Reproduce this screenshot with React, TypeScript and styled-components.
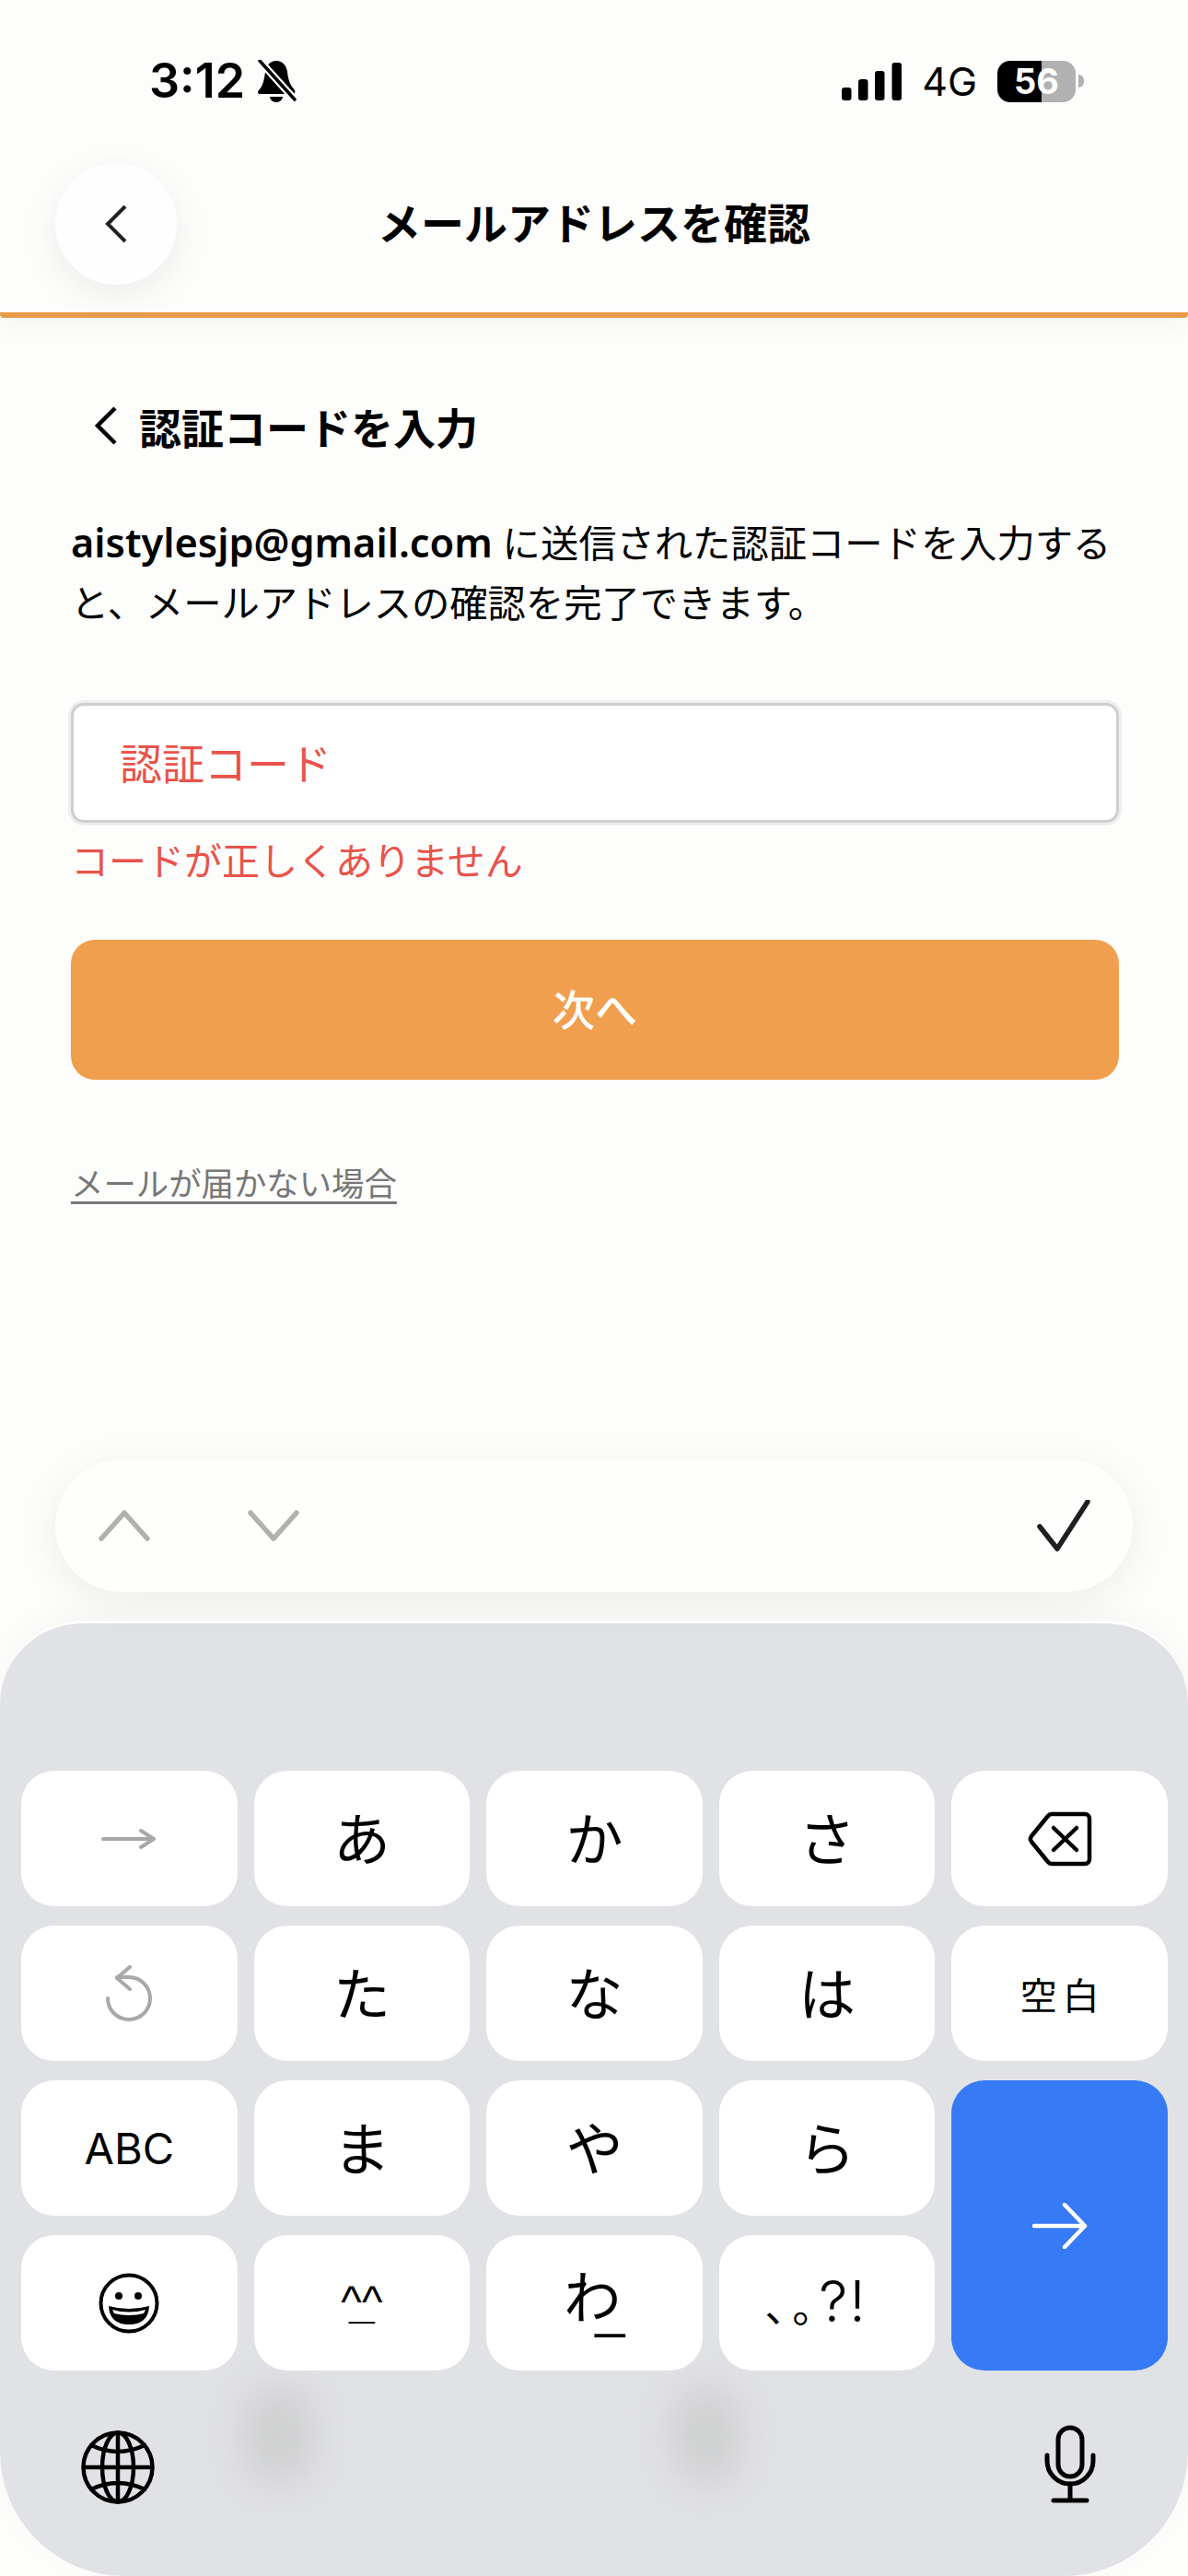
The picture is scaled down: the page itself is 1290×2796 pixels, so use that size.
import React from 'react'
import styled, { createGlobalStyle } from 'styled-components'

const GlobalStyle = createGlobalStyle`
  html, body {
    margin: 0;
    padding: 0;
    background: #fdfdfb;
  }
  * {
    box-sizing: border-box;
  }
`

const UI_FONT = `"Noto Sans", "Noto Sans CJK JP", sans-serif`
const JP_FONT = `"Noto Sans CJK JP", sans-serif`
const SYS_FONT = `Inter, "Liberation Sans", sans-serif`

const Page = styled.div`
  width: 1290px;
  height: 2796px;
  display: flex;
  flex-direction: column;
  overflow: hidden;
  background: #fdfdfb;
  font-family: ${UI_FONT};
`

const TopArea = styled.header`
  position: relative;
  z-index: 1;
  border-bottom: 6px solid #e89b48;
  border-radius: 0 0 4px 4px;
  box-shadow: 0 10px 26px rgba(0, 0, 0, 0.035);
`

const StatusBar = styled.div`
  height: 177px;
  padding: 64px 113px 0 162px;
  display: flex;
  justify-content: space-between;
  align-items: flex-start;
  font-family: ${SYS_FONT};
  color: #000;
`

const StatusGroup = styled.div`
  display: flex;
  align-items: center;
`

const Time = styled.span`
  font-size: 52px;
  line-height: 48px;
  font-weight: 600;
  margin-right: 14px;
`

const Network = styled.span`
  font-size: 43px;
  line-height: 48px;
  font-weight: 400;
  margin: 0 22px;
`

const Battery = styled.div<{ $level: number }>`
  width: 85px;
  height: 45px;
  border-radius: 14px;
  display: flex;
  align-items: center;
  justify-content: center;
  color: #fff;
  font-size: 38px;
  font-weight: 700;
  background: linear-gradient(
    90deg,
    #000 ${(p) => p.$level}%,
    #b1b1b1 ${(p) => p.$level}%
  );
`

const BatteryTip = styled.div`
  width: 6px;
  height: 14px;
  margin-left: 3px;
  border-radius: 0 7px 7px 0;
  background: #b1b1b1;
`

const NavBar = styled.div`
  display: grid;
  grid-template-columns: 132px 1fr 132px;
  align-items: center;
  padding: 0 60px 30px;
`

const BackButton = styled.button`
  width: 132px;
  height: 132px;
  padding: 0;
  border: 0;
  border-radius: 50%;
  background: #fefefe;
  box-shadow: 0 12px 40px rgba(0, 0, 0, 0.07);
  display: flex;
  align-items: center;
  justify-content: center;
`

const NavTitle = styled.h1`
  margin: -6px 0 0;
  text-align: center;
  font-family: ${JP_FONT};
  font-size: 47px;
  line-height: 66px;
  font-weight: 700;
  color: #000;
`

const Content = styled.main`
  flex: 1;
  padding: 86px 75px 0 77px;
`

const SubHeader = styled.div`
  display: flex;
  align-items: center;
  gap: 23px;
  margin-left: 26px;
`

const SubTitle = styled.h2`
  margin: 0;
  font-family: ${JP_FONT};
  font-size: 46px;
  line-height: 62px;
  font-weight: 700;
  color: #000;
`

const Description = styled.p`
  margin: 63px 0 0;
  font-size: 41.3px;
  line-height: 65px;
  color: #000;

  strong {
    font-size: 43.3px;
    font-weight: 600;
  }
`

const CodeInput = styled.div`
  height: 130px;
  margin-top: 76px;
  padding: 0 0 4px 50px;
  display: flex;
  align-items: center;
  background: #fff;
  border: 3px solid #cfcfcf;
  border-radius: 14px;
  box-shadow: 0 0 0 3px #eeeeee;
  font-family: ${JP_FONT};
  font-size: 46px;
  color: #e9534b;
`

const ErrorText = styled.div`
  margin-top: 9px;
  font-family: ${JP_FONT};
  font-size: 41px;
  line-height: 60px;
  color: #e9534b;
`

const NextButton = styled.button`
  display: block;
  width: 100%;
  height: 152px;
  margin-top: 58px;
  padding: 0 0 6px;
  border: 0;
  border-radius: 26px;
  background: #f09f4e;
  color: #fff;
  font-family: ${JP_FONT};
  font-size: 46px;
  font-weight: 500;
`

const HelpLink = styled.a`
  display: inline-block;
  margin-top: 84px;
  font-family: ${JP_FONT};
  font-size: 35.4px;
  line-height: 54px;
  color: #777;
  text-decoration: underline;
  text-decoration-thickness: 3px;
  text-underline-offset: 6px;
`

const AccessoryBar = styled.div`
  position: relative;
  z-index: 1;
  height: 144px;
  margin: 0 60px 31px;
  padding: 0 46px 0 47px;
  display: flex;
  align-items: center;
  gap: 106px;
  border-radius: 72px;
  background: #fefefc;
  box-shadow: 0 10px 46px rgba(0, 0, 0, 0.07);
`

const CheckSlot = styled.div`
  margin-left: auto;
`

const Keyboard = styled.section`
  position: relative;
  height: 1037px;
  padding: 160px 22px 0 23px;
  overflow: hidden;
  background: #e1e2e5;
  border-top: 3px solid #fff;
  border-radius: 90px 90px 135px 135px;
  box-shadow: 0 -8px 30px rgba(0, 0, 0, 0.03);
`

const Smudge = styled.div<{ $left: number; $top: number; $width: number; $height: number }>`
  position: absolute;
  left: ${(p) => p.$left}px;
  top: ${(p) => p.$top}px;
  width: ${(p) => p.$width}px;
  height: ${(p) => p.$height}px;
  border-radius: 40px;
  background: #cfd0d1;
  filter: blur(20px);
`

const KeyGrid = styled.div`
  position: relative;
  display: grid;
  grid-template-columns: repeat(5, 1fr);
  grid-auto-rows: 147px;
  gap: 21px 18px;
`

const Key = styled.div<{ $tall?: boolean; $primary?: boolean }>`
  display: flex;
  align-items: center;
  justify-content: center;
  border-radius: 36px;
  background: ${(p) => (p.$primary ? '#377af6' : '#fff')};
  grid-row: ${(p) => (p.$tall ? 'span 2' : 'auto')};
  color: #000;
`

const Kana = styled.span`
  font-family: ${JP_FONT};
  font-size: 62px;
  line-height: 1;
  font-weight: 400;
  margin-top: -6px;
`

const Underscore = styled.span`
  font-family: "Liberation Sans", sans-serif;
  font-size: 58px;
  margin-left: -28px;
  vertical-align: -9px;
`

const Label = styled.span`
  font-family: ${SYS_FONT};
  font-size: 47px;
  font-weight: 400;
`

const Spaced = styled.span`
  font-family: ${JP_FONT};
  font-size: 40px;
  letter-spacing: 6px;
  margin-right: -6px;
`

const Face = styled.div`
  display: flex;
  flex-direction: column;
  align-items: center;
  margin-top: -8px;
  font-family: "Liberation Sans", sans-serif;
  line-height: 40px;
`

const Carets = styled.span`
  height: 36px;
  font-size: 48px;
`

const FaceLine = styled.span`
  height: 34px;
  margin-top: -36px;
  font-size: 50px;
  font-weight: 700;
`

const Punctuation = styled.div`
  display: flex;
  align-items: baseline;
  margin: -4px 24px 0 0;
`

const Marks = styled.span`
  font-family: ${JP_FONT};
  font-size: 46px;
  letter-spacing: -16px;
  margin-right: -1px;
  text-spacing-trim: space-all;
`

const Exclaim = styled.span`
  font-family: ${SYS_FONT};
  font-size: 62px;
  font-weight: 300;
  letter-spacing: 2px;
`

const BottomRow = styled.div`
  position: relative;
  margin-top: 59px;
  padding: 0 78px 0 65px;
  display: flex;
  justify-content: space-between;
  align-items: flex-end;
`

const Icon = styled.svg`
  display: block;
  flex: none;
  fill: none;
  stroke-linecap: round;
  stroke-linejoin: round;
`

const Chevron = ({ stroke, width, height, sw }: { stroke: string; width: number; height: number; sw: number }) => (
  <Icon width={width} height={height} viewBox={`0 0 ${width} ${height}`} stroke={stroke} strokeWidth={sw}>
    <path d={`M${width - 3} 2 L3 ${height / 2} L${width - 3} ${height - 2}`} strokeLinecap="butt" strokeLinejoin="miter" />
  </Icon>
)

const BellSlash = () => (
  <Icon width={42} height={47} viewBox="0 0 42 47">
    <path
      fill="#000"
      d="M20 1C27 1 31 6 32 13C33 22 35 27 40 33C41 35 40 37 38 37L3 37C0 37 -1 35 1 33C5 29 7 22 8 13C9 6 13 1 20 1Z"
    />
    <path fill="#000" d="M13 40H27A7 6 0 0 1 13 40Z" />
    <path d="M2 1L40 43" stroke="#fdfdfb" strokeWidth="8" />
    <path d="M2 1L40 43" stroke="#000" strokeWidth="3.5" />
  </Icon>
)

const SignalBars = () => (
  <svg width={65} height={41} viewBox="0 0 65 41" style={{ display: 'block' }}>
    <rect x="0" y="27" width="10.5" height="14" rx="3" />
    <rect x="18" y="18" width="10.5" height="23" rx="3" />
    <rect x="36" y="9" width="10.5" height="32" rx="3" />
    <rect x="54.5" y="0" width="10.5" height="41" rx="3" />
  </svg>
)

const RowChevron = ({ up }: { up?: boolean }) => (
  <Icon width={56} height={34} viewBox="0 0 56 34" stroke="#b0b0ae" strokeWidth={5.5}>
    <path d={up ? 'M3 31L28 3L53 31' : 'M3 3L28 31L53 3'} />
  </Icon>
)

const Check = () => (
  <Icon width={58} height={56} viewBox="0 0 58 56" stroke="#1f1f1f" strokeWidth={5.5}>
    <path d="M3 29L22 53L55 2" />
  </Icon>
)

const ForwardArrow = () => (
  <Icon width={60} height={24} viewBox="0 0 60 24" stroke="#a8a8a8" strokeWidth={4}>
    <path d="M2 12H57M43 3L57 12L43 21" />
  </Icon>
)

const UndoArrow = () => (
  <Icon width={52} height={62} viewBox="0 0 52 62" stroke="#a8a8a8" strokeWidth={4}>
    <path d="M3 36A23 23 0 1 0 26 13H13" />
    <path d="M27 2L13 14L27 26" />
  </Icon>
)

const Backspace = () => (
  <Icon width={70} height={60} viewBox="0 0 70 60" stroke="#000" strokeWidth={4.5}>
    <path d="M26 3H62A5 5 0 0 1 67 8V52A5 5 0 0 1 62 57H26A6 6 0 0 1 22 55L4 33A5 5 0 0 1 4 27L22 5A6 6 0 0 1 26 3Z" />
    <path d="M28 18L53 42M53 18L28 42" />
  </Icon>
)

const Smiley = () => (
  <Icon width={66} height={66} viewBox="0 0 66 66" stroke="#000" strokeWidth={4}>
    <circle cx="33" cy="33" r="30.5" />
    <circle cx="22" cy="25" r="4" fill="#000" stroke="none" />
    <circle cx="43" cy="25" r="4" fill="#000" stroke="none" />
    <path fill="#000" stroke="none" d="M11 36Q33 42 55 36Q54 56 33 56Q12 56 11 36Z" />
    <path fill="#fff" stroke="none" d="M15 40Q33 45 51 40L49 44Q33 48 17 44Z" />
  </Icon>
)

const EnterArrow = () => (
  <Icon width={60} height={50} viewBox="0 0 60 50" stroke="#fff" strokeWidth={4.5}>
    <path d="M2 25H57M35 2L57 25L35 48" />
  </Icon>
)

const Globe = () => (
  <Icon width={80} height={80} viewBox="0 0 80 80" stroke="#000" strokeWidth={4.5}>
    <circle cx="40" cy="40" r="37.5" />
    <ellipse cx="40" cy="40" rx="17" ry="37.5" />
    <path d="M40 3V77M3 40H77" />
    <path d="M11 16Q40 30 69 16M11 64Q40 50 69 64" />
  </Icon>
)

const Mic = () => (
  <Icon width={56} height={86} viewBox="0 0 56 86" stroke="#000" strokeWidth={5}>
    <rect x="15" y="3" width="26" height="53" rx="13" />
    <path d="M3 33V39A25 25 0 0 0 53 39V33" />
    <path d="M28 64V81M10 82H46" />
  </Icon>
)

const App: React.FC = () => {
  const kana = (c: string) => (
    <Key key={c}>
      <Kana>{c}</Kana>
    </Key>
  )

  return (
    <Page>
      <GlobalStyle />
      <TopArea>
        <StatusBar>
          <StatusGroup>
            <Time>3:12</Time>
            <BellSlash />
          </StatusGroup>
          <StatusGroup>
            <SignalBars />
            <Network>4G</Network>
            <Battery $level={56}>56</Battery>
            <BatteryTip />
          </StatusGroup>
        </StatusBar>
        <NavBar>
          <BackButton aria-label="戻る">
            <Chevron stroke="#222" width={25} height={42} sw={4} />
          </BackButton>
          <NavTitle>メールアドレスを確認</NavTitle>
        </NavBar>
      </TopArea>

      <Content>
        <SubHeader>
          <Chevron stroke="#000" width={25} height={42} sw={4.5} />
          <SubTitle>認証コードを入力</SubTitle>
        </SubHeader>
        <Description>
          <strong>aistylesjp@gmail.com</strong> に送信された認証コードを入力すると、メールアドレスの確認を完了できます。
        </Description>
        <CodeInput>認証コード</CodeInput>
        <ErrorText>コードが正しくありません</ErrorText>
        <NextButton>次へ</NextButton>
        <HelpLink>メールが届かない場合</HelpLink>
      </Content>

      <AccessoryBar>
        <RowChevron up />
        <RowChevron />
        <CheckSlot>
          <Check />
        </CheckSlot>
      </AccessoryBar>

      <Keyboard>
        <Smudge $left={262} $top={826} $width={80} $height={110} />
        <Smudge $left={729} $top={826} $width={76} $height={110} />
        <KeyGrid>
          <Key>
            <ForwardArrow />
          </Key>
          {['あ', 'か', 'さ'].map(kana)}
          <Key>
            <Backspace />
          </Key>

          <Key>
            <UndoArrow />
          </Key>
          {['た', 'な', 'は'].map(kana)}
          <Key>
            <Spaced>空白</Spaced>
          </Key>

          <Key>
            <Label>ABC</Label>
          </Key>
          {['ま', 'や', 'ら'].map(kana)}
          <Key $primary $tall>
            <EnterArrow />
          </Key>

          <Key>
            <Smiley />
          </Key>
          <Key>
            <Face>
              <Carets>^^</Carets>
              <FaceLine>_</FaceLine>
            </Face>
          </Key>
          <Key>
            <Kana>
              わ<Underscore>_</Underscore>
            </Kana>
          </Key>
          <Key>
            <Punctuation>
              <Marks>、。</Marks>
              <Exclaim>?!</Exclaim>
            </Punctuation>
          </Key>
        </KeyGrid>
        <BottomRow>
          <Globe />
          <Mic />
        </BottomRow>
      </Keyboard>
    </Page>
  )
}

export default App
